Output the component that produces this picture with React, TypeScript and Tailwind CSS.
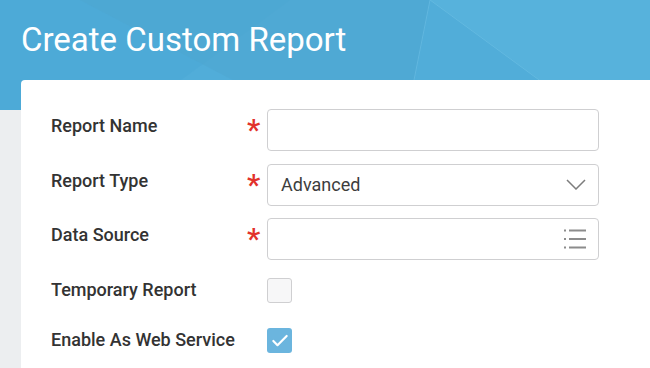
import { Check } from "lucide-react"

const labelCls = "w-[196px] shrink-0 pt-[5px] text-[18px] leading-6 font-medium text-[#333333]"

function Required() {
  return (
    <span className="w-[20px] shrink-0 pt-[6px] text-[30px] leading-none font-medium text-[#e2322b]">*</span>
  )
}

function ListIcon() {
  return (
    <svg width="22" height="20" viewBox="0 0 22 20" fill="none" stroke="#8c8c8c" strokeWidth="2">
      <path d="M0 1.5h2M5 1.5h17M0 10h2M5 10h17M0 18.5h2M5 18.5h17" />
    </svg>
  )
}

function Chevron() {
  return (
    <svg width="20" height="11" viewBox="0 0 20 11" fill="none" stroke="#7d7d7d" strokeWidth="1.5">
      <path d="M1 1l9 9 9-9" />
    </svg>
  )
}

export default function App() {
  return (
    <div className="w-[650px] h-[368px] overflow-hidden bg-[#eceef0] font-['Roboto',sans-serif]">
      {/* Header band */}
      <div className="relative h-[110px] bg-[#51add9] overflow-hidden">
        <svg className="absolute inset-0" width="650" height="110" viewBox="0 0 650 110">
          <polygon points="0,0 290,0 140,110 0,110" fill="#4aa8d6" opacity="0.5" />
          <polygon points="80,0 430,0 408,110 290,110" fill="#4ea6d0" opacity="0.55" />
          <polygon points="430,0 650,0 650,110 580,110" fill="#5bb5de" opacity="0.6" />
          <path d="M430 0 L408 110 M430 0 L580 110" stroke="#6cbfe4" strokeWidth="1" opacity="0.6" />
        </svg>
        <h1 className="relative pl-[21px] pt-[20px] text-[33px] leading-10 font-normal text-white whitespace-nowrap">
          Create Custom Report
        </h1>
      </div>

      {/* Form card */}
      <div className="-mt-[30px] ml-[21px] relative bg-white rounded-tl-[4px] h-[300px] pl-[30px] pt-[29px]">
        <div className="flex flex-col gap-[12.5px]">
          <div className="flex items-start">
            <label className={labelCls}>Report Name</label>
            <Required />
            <div className="w-[332px] h-[42px] rounded-[4px] border border-[#cfcfd1] bg-white" />
          </div>

          <div className="flex items-start">
            <label className={labelCls}>Report Type</label>
            <Required />
            <div className="w-[332px] h-[42px] rounded-[4px] border border-[#cfcfd1] bg-white flex items-center justify-between pl-[13px] pr-[12px]">
              <span className="text-[18px] text-[#3d3d3d]">Advanced</span>
              <Chevron />
            </div>
          </div>

          <div className="flex items-start">
            <label className={labelCls}>Data Source</label>
            <Required />
            <div className="w-[332px] h-[42px] rounded-[4px] border border-[#cfcfd1] bg-white flex items-center justify-end pr-[12px]">
              <ListIcon />
            </div>
          </div>
        </div>

        <div className="mt-[18px] flex items-center">
          <label className="w-[216px] shrink-0 text-[18px] leading-6 font-medium text-[#333333] -translate-y-[1px]">Temporary Report</label>
          <div className="w-[25px] h-[25px] rounded-[3px] border border-[#cfcfd1] bg-[#f7f7f8]" />
        </div>

        <div className="mt-[25px] flex items-center">
          <label className="w-[216px] shrink-0 text-[18px] leading-6 font-medium text-[#333333] -translate-y-[1px]">Enable As Web Service</label>
          <div className="w-[25px] h-[25px] rounded-[3px] bg-[#6bb5de] flex items-center justify-center">
            <Check className="w-[20px] h-[20px] text-white" strokeWidth={2.6} />
          </div>
        </div>
      </div>
    </div>
  )
}
